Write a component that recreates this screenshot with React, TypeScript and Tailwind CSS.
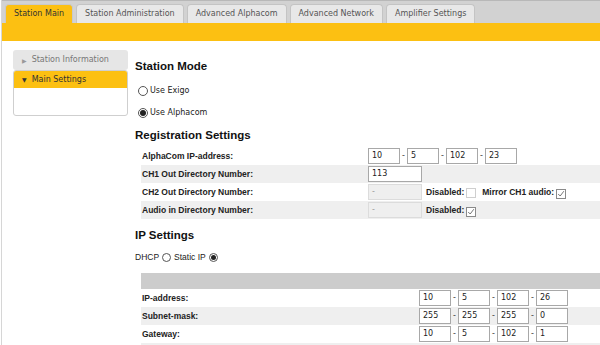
import React from "react";

const tabs = [
  { name: "Station Main", active: true },
  { name: "Station Administration" },
  { name: "Advanced Alphacom" },
  { name: "Advanced Network" },
  { name: "Amplifier Settings" },
];

const verdana = "font-['DejaVu_Sans',Verdana,sans-serif]";
const arial = "font-['Liberation_Sans',Arial,sans-serif]";

function Radio({ checked, small }: { checked?: boolean; small?: boolean }) {
  return (
    <span
      className={`inline-flex items-center justify-center rounded-full border border-[#555] bg-white ${
        small ? "w-[9px] h-[9px]" : "w-[10px] h-[10px]"
      }`}
    >
      {checked && <span className={`rounded-full bg-[#222] ${small ? "w-[5px] h-[5px]" : "w-[6px] h-[6px]"}`} />}
    </span>
  );
}

function Check({ checked, disabled }: { checked?: boolean; disabled?: boolean }) {
  return (
    <span
      className={`inline-flex w-[10px] h-[10px] border bg-white ${
        disabled ? "border-[#cfcfcf]" : "border-[#8a8a8a]"
      }`}
    >
      {checked && (
        <svg viewBox="0 0 10 10" className="w-full h-full">
          <path d="M1.5 5 L4 7.5 L8.5 1.5" fill="none" stroke="#555" strokeWidth="1" />
        </svg>
      )}
    </span>
  );
}

function Box({ value, w = "w-[32px]", disabled }: { value: string; w?: string; disabled?: boolean }) {
  return (
    <span
      className={`${w} h-[16px] flex items-center pl-[3px] border text-[8px] ${verdana} ${
        disabled ? "bg-[#efefef] border-[#dcdcdc] text-[#999]" : "bg-white border-[#a8a8a8] text-[#222]"
      }`}
    >
      {value}
    </span>
  );
}

function Ip({ parts }: { parts: string[] }) {
  return (
    <div className="flex items-center">
      {parts.map((p, i) => (
        <React.Fragment key={i}>
          {i > 0 && <span className={`w-[7px] text-center text-[8px] text-[#333] ${verdana}`}>-</span>}
          <Box value={p} />
        </React.Fragment>
      ))}
    </div>
  );
}

function Row({ label, gray, labelW, children }: { label: string; gray?: boolean; labelW: string; children: React.ReactNode }) {
  return (
    <div className={`flex items-center h-[18px] ${gray ? "bg-[#efefef]" : "bg-white"}`}>
      <span className={`${labelW} shrink-0 pl-[1px] text-[8.5px] font-bold text-[#222] ${arial}`}>{label}</span>
      {children}
    </div>
  );
}

function Heading({ children }: { children: React.ReactNode }) {
  return <h2 className={`h-[14px] leading-[14px] text-[11.5px] font-bold text-[#111] ${arial}`}>{children}</h2>;
}

const bold = `text-[8.5px] font-bold text-[#222] ${arial}`;

export default function App() {
  return (
    <div className="w-[600px] h-[345px] overflow-hidden bg-white">
      <div className="ml-px h-full border-l border-[#d6d6d6]">
        {/* tab bar */}
        <div className="h-[23px] bg-[#d2d2d2] border-t border-[#b8b8b8] flex items-end gap-[3px] pl-[3px]">
          {tabs.map((t) => (
            <div
              key={t.name}
              className={`h-[19px] px-[8px] flex items-center rounded-t-[4px] border border-b-0 text-[8px] ${verdana} ${
                t.active
                  ? "bg-[#fcc012] border-[#c9c9c9] text-[#333]"
                  : "bg-[#e8e8e8] border-[#c4c4c4] text-[#555]"
              }`}
            >
              {t.name}
            </div>
          ))}
        </div>
        <div className="h-[18px] bg-[#fcc012]" />

        <div className="flex">
          {/* sidebar */}
          <div className="ml-[11px] mt-[9px] w-[115px] shrink-0">
            <div className={`h-[20px] flex items-center gap-[5px] pl-[9px] bg-[#e6e6e6] rounded-[3px] text-[8px] text-[#777] ${verdana}`}>
              <span className="text-[6px] text-[#999]">▶</span>
              Station Information
            </div>
            <div className="h-[46px] border border-[#cfcfcf] rounded-[3px] overflow-hidden">
              <div className={`h-[17px] flex items-center gap-[5px] pl-[8px] bg-[#fcc012] text-[8px] text-[#333] ${verdana}`}>
                <span className="text-[6px]">▼</span>
                Main Settings
              </div>
            </div>
          </div>

          {/* main */}
          <div className="ml-[7px] mt-[18px] flex-1">
            <Heading>Station Mode</Heading>
            <div className="mt-[7px] pl-[3px]">
              <div className={`h-[22px] flex items-center gap-[2px] text-[8px] text-[#222] ${verdana}`}>
                <Radio /> Use Exigo
              </div>
              <div className={`h-[22px] flex items-center gap-[2px] text-[8px] text-[#222] ${verdana}`}>
                <Radio checked /> Use Alphacom
              </div>
            </div>

            <div className="mt-[4px]">
              <Heading>Registration Settings</Heading>
            </div>
            <div className="mt-[5px] ml-[6px]">
              <Row label="AlphaCom IP-address:" labelW="w-[227px]">
                <Ip parts={["10", "5", "102", "23"]} />
              </Row>
              <Row label="CH1 Out Directory Number:" labelW="w-[227px]" gray>
                <Box value="113" w="w-[54px]" />
              </Row>
              <Row label="CH2 Out Directory Number:" labelW="w-[227px]">
                <Box value="-" w="w-[54px]" disabled />
                <span className={`ml-[4px] ${bold}`}>Disabled:</span>
                <span className="ml-[2px]">
                  <Check disabled />
                </span>
                <span className={`ml-[6px] ${bold}`}>Mirror CH1 audio:</span>
                <span className="ml-[2px]">
                  <Check checked />
                </span>
              </Row>
              <Row label="Audio in Directory Number:" labelW="w-[227px]" gray>
                <Box value="-" w="w-[54px]" disabled />
                <span className={`ml-[4px] ${bold}`}>Disabled:</span>
                <span className="ml-[2px]">
                  <Check checked />
                </span>
              </Row>
            </div>

            <div className="mt-[9px]">
              <Heading>IP Settings</Heading>
            </div>
            <div className={`mt-[7px] h-[16px] flex items-center gap-[3px] text-[8.5px] text-[#222] ${arial}`}>
              DHCP <Radio small /> Static IP <Radio small checked />
            </div>
            <div className="mt-[8px] ml-[6px]">
              <div className="h-[16px] bg-[#cccccc]" />
              <Row label="IP-address:" labelW="w-[278px]">
                <Ip parts={["10", "5", "102", "26"]} />
              </Row>
              <Row label="Subnet-mask:" labelW="w-[278px]" gray>
                <Ip parts={["255", "255", "255", "0"]} />
              </Row>
              <Row label="Gateway:" labelW="w-[278px]">
                <Ip parts={["10", "5", "102", "1"]} />
              </Row>
              <div className="h-[18px] bg-[#efefef]" />
            </div>
          </div>
        </div>
      </div>
    </div>
  );
}
